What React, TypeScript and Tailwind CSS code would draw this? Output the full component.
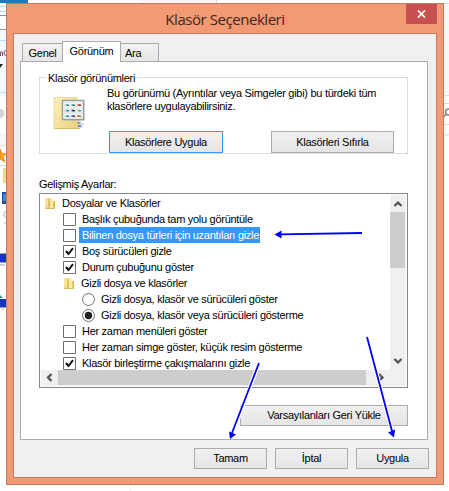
import React from 'react';

const btn = 'flex items-center justify-center border border-[#acacac] bg-linear-to-b from-[#f0f0f0] to-[#e5e5e5] whitespace-nowrap shrink-0';

function Text({ children, className = '' }: { children: React.ReactNode; className?: string }) {
  return <span className={'block whitespace-nowrap ' + className}>{children}</span>;
}

function SmallFolder() {
  return (
    <svg width="12" height="13" viewBox="0 0 12 13" className="shrink-0">
      <path d="M1 1h5v11H1z" fill="#f0d67c" />
      <path d="M1 1h3v9H1z" fill="#f8e498" />
      <path d="M5 4h6v8H5z" fill="#e6c766" />
      <path d="M6 1l3 1v10l-3-1z" fill="#f9eaa9" />
      <path d="M5 2v10M10.500 4v8" stroke="#d6b653" />
      <path d="M1 11.500h10" stroke="#d9bb5b" />
    </svg>
  );
}

function BigFolder() {
  const cells = [
    ['#6fc3cf', '#2c8c68'], ['#58a9d8', '#2f7d4c'], ['#d2691e', '#a8320c'],
    ['#4fb8c6', '#2d7f9a'], ['#39508f', '#22305f'], ['#8fd04e', '#3f9ed0'],
    ['#59bccb', '#2b8f62'], ['#4a7ec0', '#26466f'], ['#cf5a1c', '#7f9a2c'],
  ];
  return (
    <svg width="34" height="34" viewBox="0 0 34 34" className="shrink-0">
      <defs>
        <linearGradient id="folder" x2="1" y2="1">
          <stop stopColor="#fdf3bd" />
          <stop offset="1" stopColor="#ebd07a" />
        </linearGradient>
      </defs>
      <path d="M2 1.500h23v31H2z" fill="url(#folder)" stroke="#ead489" strokeWidth=".8" />
      <path d="M25 24h3v8h-3z" fill="#efd683" />
      <path d="M3 32.500h25" stroke="#d9be63" />
      <path d="M28 25l4 3-2 4h-3z" fill="#d3dbe2" />
      <path d="M26.500 26v2M26 30h3" stroke="#668fc9" strokeWidth="2" />
      <path d="M12 5h21v20H12z" fill="#bbb" opacity=".5" />
      <path d="M10.500 4.500h21v19h-21z" fill="#fff" stroke="#9b9da1" strokeWidth="1.500" />
      {cells.map((c, i) => (
        <g key={i} transform={`translate(${12.5 + (i % 3) * 6} ${6.5 + Math.floor(i / 3) * 5.5})`}>
          <path d="M0 0h5v4.500H0z" fill="#f6f8f9" stroke="#cdd0d3" strokeWidth=".5" />
          <path d="M1 1.500h2v2H1z" fill={c[0]} />
          <path d="M2.500 2h2v1.500h-2z" fill={c[1]} />
        </g>
      ))}
    </svg>
  );
}

function Check({ on = false }: { on?: boolean }) {
  return (
    <svg width="13" height="13" viewBox="0 0 13 13" className="shrink-0">
      <path d="M.5.5h12v12H.5z" fill="#fff" stroke="#707070" />
      {on && <path d="M3 6l2.500 3L10 3.200" fill="none" stroke="#111" strokeWidth="2" />}
    </svg>
  );
}

function Radio({ on = false }: { on?: boolean }) {
  return (
    <svg width="13" height="13" viewBox="0 0 13 13" className="shrink-0">
      <circle cx="6.500" cy="6.500" r="6" fill="#fff" stroke="#707070" />
      {on && <circle cx="6.500" cy="6.500" r="3.700" fill="#222" />}
    </svg>
  );
}

function Chevron({ d }: { d: string }) {
  return (
    <svg width="16" height="16" viewBox="0 0 16 16" className="block shrink-0">
      <path d={d} fill="none" stroke="#505050" strokeWidth="2.200" />
    </svg>
  );
}

function Row({ icon, label, pad, sel = false }: { icon: React.ReactNode; label: string; pad: string; sel?: boolean }) {
  return (
    <div className={'flex h-4 shrink-0 items-center ' + pad}>
      {icon}
      <Text className={sel ? 'ml-[3px] h-4 w-[181px] bg-[#3399ff] pl-[3px] leading-4 text-white' : 'ml-[6px]'}>{label}</Text>
    </div>
  );
}

function LeftStrip() {
  return (
    <svg width="6" height="482" viewBox="0 3 6 482" className="shrink-0">
      <path d="M0 3h6v93H0z" fill="#f4f9fd" />
      <path d="M0 6.500h6M0 11.500h6M0 40.500h6M0 92.500h6" stroke="#b9def6" />
      <path d="M0 15.500h6M0 29.500h6" stroke="#8f8f8f" />
      <path d="M0 16h6v13H0z" fill="#fff" />
      <path d="M.5 56v-4q2-1 2 1v3M6 50.500q-2 0-2 2.500t2 2.500" fill="none" stroke="#7d4b62" />
      <path d="M0 64h3l-3 4z" fill="#222" />
      <path d="M0 109a4 4 0 0 1 0 9z" fill="#d5d5d5" />
      <path d="M0 133h6v12H0z" fill="#f7f7f7" />
      <path d="M0 145.500h6M0 165.500h6" stroke="#ddd" />
      <path d="M0 149l2 4 4 1-3 3 2 5-5-3z" fill="#ffa51f" stroke="#e77722" strokeWidth=".7" />
      <path d="M3 168h3v15H3z" fill="#f3d987" />
      <path d="M2 192h4v12H2z" fill="#244d93" />
      <path d="M3 194h3v7H3z" fill="#3c8bd0" />
      <path d="M6 211a4 4 0 0 0 0 7M4 223h2" fill="none" stroke="#aaa" />
      <path d="M0 254h6v8H0zM0 299h6v8H0z" fill="#1635bd" />
      <path d="M0 253.500h6M0 262.500h6M0 265h5M0 307.500h6M3 307v3" stroke="#9ba3aa" />
      <path d="M0 295l3 3H0z" fill="#2b9c8d" />
    </svg>
  );
}

export default function App() {
  return (
    <div className="relative flex h-[491px] w-[449px] flex-col overflow-hidden bg-white font-['Liberation_Sans',Arial,sans-serif] text-[11px] leading-[13px] tracking-[-0.29px] text-black">
      <div className="flex h-[3px] shrink-0">
        <div className="w-7 bg-[#1979ca]" />
        <div className="w-28 bg-white" />
        <div className="w-[77px] border-r border-[#ddd] bg-[#f5f5f5]" />
      </div>
      <div className="flex h-[482px] shrink-0">
        <LeftStrip />
        <main className="flex w-[438px] shrink-0 flex-col border border-[#c4795a] bg-[#f19a73] px-[6px] pb-[6px]">
          <header className="flex h-[29px] shrink-0 justify-between">
            <div className="w-[31px]" />
            <Text className="mt-[5px] font-['Open_Sans',sans-serif] text-[15px] leading-5 tracking-[-0.45px] text-[#402820]">Klasör Seçenekleri</Text>
            <div className="flex h-5 w-[31px] items-center justify-center bg-[#c75050]">
              <svg width="9" height="8" viewBox="0 0 9 8"><path d="M1 .5l7 7M8 .5l-7 7" stroke="#fff" strokeWidth="1.700" /></svg>
            </div>
          </header>
          <div className="flex h-[445px] shrink-0 flex-col border border-[#c4795a] bg-[#f0f0f0] px-[6px]">
            <nav className="z-10 -mb-px flex h-[28px] shrink-0 items-end pl-[2px]">
              <div className="mb-px flex h-[18px] w-10 justify-center border border-r-0 border-b-0 border-[#acacac] bg-linear-to-b from-[#f2f2f2] to-[#e6e6e6] pt-[3px]"><Text>Genel</Text></div>
              <div className="flex h-[21px] w-[59px] justify-center border border-b-0 border-[#acacac] bg-white pt-[3px]"><Text>Görünüm</Text></div>
              <div className="mb-px flex h-[18px] w-[38px] border border-b-0 border-l-0 border-[#acacac] bg-linear-to-b from-[#f2f2f2] to-[#e6e6e6] pt-[3px] pl-1"><Text>Ara</Text></div>
            </nav>
            <section className="flex h-[379px] w-[408px] shrink-0 flex-col border border-[#acacac] bg-white pl-[18px]">
              <fieldset className="mt-[9px] flex h-[95px] w-[369px] shrink-0 flex-col">
                <div className="flex h-[13px] items-center">
                  <div className="h-[7px] w-[7px] self-end border-t border-l border-[#dcdcdc]" />
                  <Text className="pt-px pr-[2px] pl-[2px]">Klasör görünümleri</Text>
                  <div className="h-[7px] grow self-end border-t border-r border-[#dcdcdc]" />
                </div>
                <div className="flex grow flex-col border border-t-0 border-[#dcdcdc]">
                  <div className="flex h-[47px] shrink-0 pl-[12px]">
                    <div className="mt-[12px]"><BigFolder /></div>
                    <div className="ml-[21px] mt-[3px]">
                      <Text>Bu görünümü (Ayrıntılar veya Simgeler gibi) bu türdeki tüm</Text>
                      <Text>klasörlere uygulayabilirsiniz.</Text>
                    </div>
                  </div>
                  <div className="flex pl-[69px]">
                    <button className={btn + ' h-[22px] w-[114px] border-[#3399ff]!'}>Klasörlere Uygula</button>
                    <button className={btn + ' ml-12 h-[22px] w-[123px]'}>Klasörleri Sıfırla</button>
                  </div>
                </div>
              </fieldset>
              <Text className="mt-[12px] mb-[2px] shrink-0">Gelişmiş Ayarlar:</Text>
              <div className="flex h-[195px] w-[369px] shrink-0 flex-col border border-[#828790] p-px">
                <div className="flex h-[175px] shrink-0 overflow-hidden">
                  <div className="flex w-[349px] shrink-0 flex-col">
                    <Row pad="pl-[3px]" icon={<SmallFolder />} label="Dosyalar ve Klasörler" />
                    <Row pad="pl-[22px]" icon={<Check />} label="Başlık çubuğunda tam yolu görüntüle" />
                    <Row pad="pl-[22px]" icon={<Check />} label="Bilinen dosya türleri için uzantıları gizle" sel />
                    <Row pad="pl-[22px]" icon={<Check on />} label="Boş sürücüleri gizle" />
                    <Row pad="pl-[22px]" icon={<Check on />} label="Durum çubuğunu göster" />
                    <Row pad="pl-[22px]" icon={<SmallFolder />} label="Gizli dosya ve klasörler" />
                    <Row pad="pl-[41px]" icon={<Radio />} label="Gizli dosya, klasör ve sürücüleri göster" />
                    <Row pad="pl-[41px]" icon={<Radio on />} label="Gizli dosya, klasör veya sürücüleri gösterme" />
                    <Row pad="pl-[22px]" icon={<Check />} label="Her zaman menüleri göster" />
                    <Row pad="pl-[22px]" icon={<Check />} label="Her zaman simge göster, küçük resim gösterme" />
                    <Row pad="pl-[22px]" icon={<Check on />} label="Klasör birleştirme çakışmalarını gizle" />
                  </div>
                  <div className="flex w-4 shrink-0 flex-col bg-[#f0f0f0]">
                    <Chevron d="M4.500 11L8 7.500l3.500 3.500" />
                    <div className="mt-px h-14 w-[15px] bg-[#cdcdcd]" />
                    <div className="mt-auto"><Chevron d="M4.500 5L8 8.500l3.500-3.500" /></div>
                  </div>
                </div>
                <div className="flex h-4 w-[365px] shrink-0 bg-[#f0f0f0]">
                  <Chevron d="M10.500 4L7 7.500l3.500 3.500" />
                  <div className="ml-px h-[15px] w-[308px] bg-[#cdcdcd]" />
                  <div className="ml-[6px]"><Chevron d="M7 4l3.500 3.500L7 11" /></div>
                </div>
              </div>
              <button className={btn + ' mt-[17px] ml-[201px] h-[21px] w-[168px]'}>Varsayılanları Geri Yükle</button>
            </section>
            <footer className="mt-2 flex gap-2 pl-[174px]">
              <button className={btn + ' h-[21px] w-[73px]'}>Tamam</button>
              <button className={btn + ' h-[21px] w-[73px]'}>İptal</button>
              <button className={btn + ' h-[21px] w-[73px]'}>Uygula</button>
            </footer>
          </div>
        </main>
        <svg width="5" height="482" viewBox="444 3 5 482" className="shrink-0">
          <path d="M444 3h5v92h-5z" fill="#f8f8f9" />
          <path d="M444 3.500h5M444 95.500h5M444 103.500h5M444 124.500h5" stroke="#d9dce0" />
          <circle cx="448.500" cy="112" r="3" fill="none" stroke="#808080" strokeWidth="1.500" />
          <path d="M446 114l-3 4" stroke="#808080" strokeWidth="1.500" />
          <path d="M444 133h5v3h-5z" fill="#f2f2f2" />
        </svg>
      </div>
      <div className="ml-[130px] h-[6px] w-px bg-[#eee]" />
      <svg className="absolute inset-0 z-20" width="449" height="491" viewBox="0 0 449 491">
        <path d="M259 363L232 435M367 337l25 94" fill="none" stroke="#fff" strokeWidth="4" />
        <path d="M362 233l-82 1.400M259 363l-27 70M367 337l25 94" fill="none" stroke="#0000f5" strokeWidth="1.800" />
        <path d="M274.500 234.500l7-4v8zM230 439l-1-7.500 7 3zM394 437.500l-6-5 7-3z" fill="#0000f5" />
      </svg>
    </div>
  );
}
